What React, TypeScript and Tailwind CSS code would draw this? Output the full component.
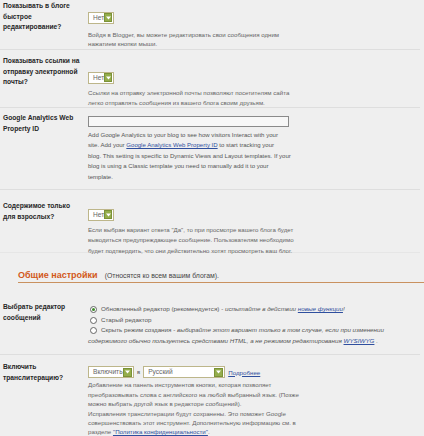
import React from "react";

const F = { fontFamily: '"Liberation Sans", Arial, sans-serif' };

function Arrow() {
  return (
    <span className="ml-auto flex h-[9px] w-[9px] items-center justify-center border border-[#7b9236] bg-[#94ad4c]">
      <svg width="5" height="4" viewBox="0 0 5 4">
        <path d="M0 0.5 L5 0.5 L2.5 3.5 Z" fill="#ffffff" />
      </svg>
    </span>
  );
}

function Sel({ text, cls }: { text: string; cls: string }) {
  return (
    <span
      className={
        "inline-flex h-[12px] items-center border border-[#bdb68a] bg-white pl-[4px] pr-[1px] text-[6.6px] text-[#666] " +
        cls
      }
    >
      <span>{text}</span>
      <Arrow />
    </span>
  );
}

function Label({ children, pt }: { children: React.ReactNode; pt: string }) {
  return (
    <div className={"w-[88px] shrink-0 pl-[3px] pr-[4px] text-[6.7px] font-bold leading-[10.5px] text-[#262626] " + pt}>
      {children}
    </div>
  );
}

function Radio({ on }: { on?: boolean }) {
  return (
    <span className="mr-[4px] inline-flex h-[7px] w-[7px] shrink-0 items-center justify-center rounded-full border border-[#666] bg-white align-middle">
      {on && <span className="h-[3px] w-[3px] rounded-full bg-[#3e8a2a]" />}
    </span>
  );
}

export default function App() {
  return (
    <div className="h-[436px] w-[424px] overflow-hidden bg-[#efefef]" style={F}>
      {/* Row 1 */}
      <div className="mr-[4px] flex h-[50px] border-b border-[#dedede]">
        <Label pt="pt-[1px]">Показывать в блоге быстрое редактирование?</Label>
        <div className="pt-[3px]">
          <Sel text="Нет" cls="w-[26px]" />
          <p className="mt-[3px] text-[6.15px] leading-[9px] text-[#666]">
            Войдя в Blogger, вы можете редактировать свои сообщения одним
            <br />
            нажатием кнопки мыши.
          </p>
        </div>
      </div>

      {/* Row 2 */}
      <div className="mr-[4px] flex h-[58px] border-b border-[#dedede]">
        <Label pt="pt-[6px]">Показывать ссылки на отправку электронной почты?</Label>
        <div className="pt-[13px]">
          <Sel text="Нет" cls="w-[26px]" />
          <p className="mt-[1px] text-[6.15px] leading-[9.5px] text-[#666]">
            Ссылки на отправку электронной почты позволяют посетителям сайта
            <br />
            легко отправлять сообщения из вашего блога своим друзьям.
          </p>
        </div>
      </div>

      {/* Row 3 */}
      <div className="mr-[4px] flex h-[82px] border-b border-[#dedede]">
        <Label pt="pt-[5px]">Google Analytics Web Property ID</Label>
        <div className="pt-[8px]">
          <div className="h-[11px] w-[201px] border border-[#8a8a8a] bg-[#f7f7f7]" />
          <p className="mt-[3px] text-[6.05px] leading-[10.4px] text-[#555]">
            Add Google Analytics to your blog to see how visitors Interact with your
            <br />
            site. Add your{" "}
            <span className="text-[#2f4f9e] underline">Google Analytics Web Property ID</span> to start
            tracking your
            <br />
            blog. This setting is specific to Dynamic Views and Layout templates. If your
            <br />
            blog is using a Classic template you need to manually add it to your
            <br />
            template.
          </p>
        </div>
      </div>

      {/* Row 4 */}
      <div className="mr-[4px] flex h-[63px] border-b border-[#e6e6e6]">
        <Label pt="pt-[11px]">Содержимое только для взрослых?</Label>
        <div className="pt-[10px]">
          <Sel text="Нет" cls="w-[26px]" />
          <p className="mt-[1px] text-[6.1px] leading-[10.4px] text-[#666]">
            Если выбран вариант ответа "Да", то при просмотре вашего блога будет
            <br />
            выводиться предупреждающее сообщение. Пользователям необходимо
            <br />
            будет подтвердить, что они действительно хотят просмотреть ваш блог.
          </p>
        </div>
      </div>

      {/* Section heading */}
      <div className="ml-[18px] mt-[16px] flex items-baseline border-b border-[#c9915f] pb-[1px]">
        <span className="text-[9px] font-bold leading-[12px] text-[#d2581a]">Общие настройки</span>
        <span className="ml-[7px] text-[6.9px] text-[#444]">(Относятся ко всем вашим блогам).</span>
      </div>

      {/* Row 5 */}
      <div className="mr-[4px] flex h-[72px] border-b border-[#dedede]">
        <Label pt="pt-[19px]">Выбрать редактор сообщений</Label>
        <div className="pt-[21px] text-[6.25px] leading-[10.5px] text-[#555]">
          <div className="flex items-center pl-[2px]">
            <Radio on />
            <span>
              Обновленный редактор (рекомендуется) -{" "}
              <i>
                испытайте в действии <span className="text-[#2f4f9e] underline">новые функции</span>!
              </i>
            </span>
          </div>
          <div className="flex items-center pl-[2px]">
            <Radio />
            <span>Старый редактор</span>
          </div>
          <div className="flex items-center pl-[2px]">
            <Radio />
            <span>
              Скрыть режим создания -{" "}
              <i>выбирайте этот вариант только в том случае, если при изменении</i>
            </span>
          </div>
          <div>
            <i>
              содержимого обычно пользуетесь средствами HTML, а не режимом редактирования{" "}
              <span className="text-[#2f4f9e] underline">WYSIWYG</span> .
            </i>
          </div>
        </div>
      </div>

      {/* Row 6 */}
      <div className="mr-[4px] flex">
        <Label pt="pt-[7px]">Включить транслитерацию?</Label>
        <div className="pt-[11px]">
          <div className="flex items-center">
            <Sel text="Включить" cls="w-[46px]" />
            <span className="mx-[3px] text-[6px] text-[#555]">в</span>
            <Sel text="Русский" cls="w-[82px]" />
            <span className="ml-[3px] text-[6.2px] text-[#2f4f9e] underline">Подробнее</span>
          </div>
          <p className="mt-[2px] text-[6.15px] leading-[9.4px] text-[#666]">
            Добавление на панель инструментов кнопки, которая позволяет
            <br />
            преобразовывать слова с английского на любой выбранный язык. (Позже
            <br />
            можно выбрать другой язык в редакторе сообщений).
            <br />
            Исправления транслитерации будут сохранены. Это поможет Google
            <br />
            совершенствовать этот инструмент. Дополнительную информацию см. в
            <br />
            разделе <span className="text-[#2f4f9e] underline">"Политика конфиденциальности"</span>.
          </p>
        </div>
      </div>
    </div>
  );
}
